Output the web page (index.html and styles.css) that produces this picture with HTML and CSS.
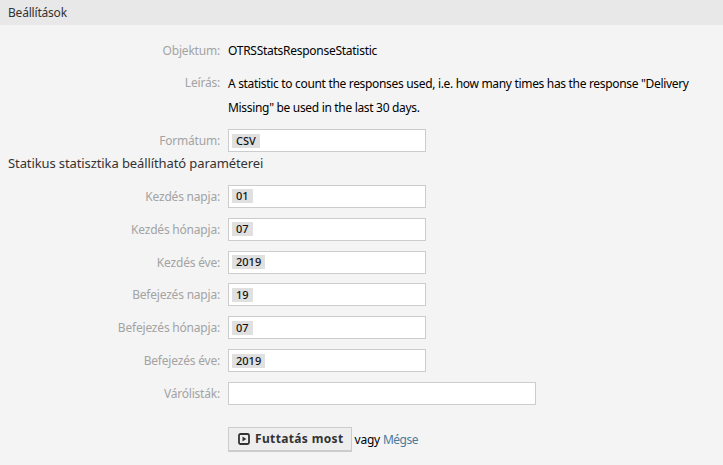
FILE: index.html
```html
<!DOCTYPE html>
<html lang="en">
<head>
    <meta charset="UTF-8">
    <title>Beállítások</title>
    <link rel="stylesheet" href="styles.css">
</head>
<body>
    <div class="header"><h2>Beállítások</h2></div>

    <div class="content">
        <div class="row row-text">
            <label>Objektum:</label>
            <div class="value">OTRSStatsResponseStatistic</div>
        </div>
        <div class="row row-desc">
            <label>Leírás:</label>
            <div class="value">A statistic to count the responses used, i.e. how many times has the response "Delivery Missing" be used in the last 30 days.</div>
        </div>
        <div class="row row-format">
            <label>Formátum:</label>
            <div class="field"><span class="tag">CSV</span></div>
        </div>

        <h3>Statikus statisztika beállítható paraméterei</h3>

        <div class="params">
            <div class="row">
                <label>Kezdés napja:</label>
                <div class="field"><span class="tag">01</span></div>
            </div>
            <div class="row">
                <label>Kezdés hónapja:</label>
                <div class="field"><span class="tag">07</span></div>
            </div>
            <div class="row">
                <label>Kezdés éve:</label>
                <div class="field"><span class="tag">2019</span></div>
            </div>
            <div class="row">
                <label>Befejezés napja:</label>
                <div class="field"><span class="tag">19</span></div>
            </div>
            <div class="row">
                <label>Befejezés hónapja:</label>
                <div class="field"><span class="tag">07</span></div>
            </div>
            <div class="row">
                <label>Befejezés éve:</label>
                <div class="field"><span class="tag">2019</span></div>
            </div>
            <div class="row">
                <label>Várólisták:</label>
                <div class="field field-wide"></div>
            </div>
        </div>

        <div class="actions">
            <button type="button" class="run-btn">
                <svg class="run-icon" width="12" height="12" viewBox="0 0 12 12">
                    <rect x="1" y="1" width="10" height="10" rx="1.5" fill="none" stroke="#333" stroke-width="1.8"/>
                    <path d="M4.5 3.4 L8.4 6 L4.5 8.6 Z" fill="#333"/>
                </svg>
                Futtatás most
            </button>
            <span class="or">vagy <a href="#">Mégse</a></span>
        </div>
    </div>
</body>
</html>
```

FILE: styles.css
```css
* {
    margin: 0;
    padding: 0;
    box-sizing: border-box;
}

body {
    font-family: "Noto Sans", "Open Sans", sans-serif;
    font-size: 12px;
    background: #f4f4f4;
    color: #000;
    overflow: hidden;
}

.header {
    height: 25px;
    background: #e8e8e8;
    padding-left: 8px;
    line-height: 25px;
}

.header h2 {
    font-size: 12px;
    font-weight: 400;
    color: #333;
    letter-spacing: -0.2px;
}

.content {
    padding-top: 13px;
}

.row {
    display: flex;
    align-items: center;
    height: 23px;
    margin-bottom: 9.83px;
}

label {
    width: 220px;
    margin-right: 8px;
    text-align: right;
    color: #a3a3a3;
    flex-shrink: 0;
    letter-spacing: -0.2px;
}

.row-text {
    height: 24px;
    margin-bottom: 8.83px;
}

.row-desc {
    height: auto;
    align-items: flex-start;
    margin-bottom: 9.5px;
}

.row-desc label {
    line-height: 24px;
}

.value {
    line-height: 24px;
    max-width: 495px;
    letter-spacing: -0.27px;
    padding-top: 1px;
}

.row-desc .value {
    letter-spacing: -0.32px;
}

.row-format {
    margin-bottom: 0;
}

.field {
    width: 198px;
    height: 23px;
    background: #fff;
    border: 1px solid #ccc;
    display: flex;
    align-items: center;
    padding-left: 3px;
}

.field-wide {
    width: 308px;
}

.tag {
    background: #e0e0e0;
    padding: 0 4px;
    font-size: 11px;
    font-weight: 500;
    line-height: 14px;
    color: #111;
}

h3 {
    font-size: 13px;
    font-weight: 400;
    color: #333;
    padding-left: 8px;
    line-height: 22px;
    margin-bottom: 10.67px;
    letter-spacing: -0.1px;
}

.actions {
    display: flex;
    align-items: center;
    margin-top: 21.83px;
    padding-left: 228px;
}

.run-btn {
    display: flex;
    align-items: center;
    gap: 5px;
    height: 25px;
    padding: 0 7px 0 9px;
    background: #eee;
    border: 1px solid #ccc;
    border-bottom-width: 2px;
    font-family: inherit;
    font-size: 12px;
    font-weight: 700;
    color: #333;
    letter-spacing: 0.35px;
}

.or {
    margin-left: 3px;
    letter-spacing: -0.2px;
}

.or a {
    color: #4a7a9c;
    text-decoration: none;
    letter-spacing: -0.5px;
}
```
